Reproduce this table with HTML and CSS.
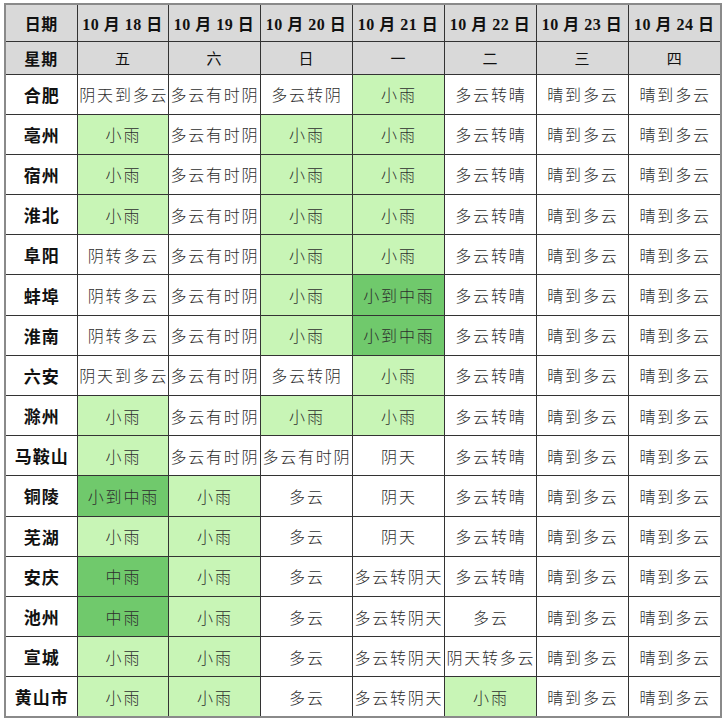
FILE: index.html
```html
<!DOCTYPE html>
<html lang="zh">
<head>
<meta charset="utf-8">
<link rel="stylesheet" href="styles.css">
</head>
<body>
<table class="wx">
<colgroup>
<col class="c-city"><col class="c-1"><col class="c-2"><col class="c-3"><col class="c-3"><col class="c-3"><col class="c-6"><col class="c-7">
</colgroup>
<thead>
<tr class="h1"><th>日期</th><th>10 月 18 日</th><th>10 月 19 日</th><th>10 月 20 日</th><th>10 月 21 日</th><th>10 月 22 日</th><th>10 月 23 日</th><th>10 月 24 日</th></tr>
<tr class="h2"><th>星期</th><td>五</td><td>六</td><td>日</td><td>一</td><td>二</td><td>三</td><td>四</td></tr>
</thead>
<tbody>
<tr><th>合肥</th><td>阴天到多云</td><td>多云有时阴</td><td>多云转阴</td><td class="l">小雨</td><td>多云转晴</td><td>晴到多云</td><td>晴到多云</td></tr>
<tr><th>亳州</th><td class="l">小雨</td><td>多云有时阴</td><td class="l">小雨</td><td class="l">小雨</td><td>多云转晴</td><td>晴到多云</td><td>晴到多云</td></tr>
<tr><th>宿州</th><td class="l">小雨</td><td>多云有时阴</td><td class="l">小雨</td><td class="l">小雨</td><td>多云转晴</td><td>晴到多云</td><td>晴到多云</td></tr>
<tr><th>淮北</th><td class="l">小雨</td><td>多云有时阴</td><td class="l">小雨</td><td class="l">小雨</td><td>多云转晴</td><td>晴到多云</td><td>晴到多云</td></tr>
<tr><th>阜阳</th><td>阴转多云</td><td>多云有时阴</td><td class="l">小雨</td><td class="l">小雨</td><td>多云转晴</td><td>晴到多云</td><td>晴到多云</td></tr>
<tr><th>蚌埠</th><td>阴转多云</td><td>多云有时阴</td><td class="l">小雨</td><td class="d">小到中雨</td><td>多云转晴</td><td>晴到多云</td><td>晴到多云</td></tr>
<tr><th>淮南</th><td>阴转多云</td><td>多云有时阴</td><td class="l">小雨</td><td class="d">小到中雨</td><td>多云转晴</td><td>晴到多云</td><td>晴到多云</td></tr>
<tr><th>六安</th><td>阴天到多云</td><td>多云有时阴</td><td>多云转阴</td><td class="l">小雨</td><td>多云转晴</td><td>晴到多云</td><td>晴到多云</td></tr>
<tr><th>滁州</th><td class="l">小雨</td><td>多云有时阴</td><td class="l">小雨</td><td class="l">小雨</td><td>多云转晴</td><td>晴到多云</td><td>晴到多云</td></tr>
<tr><th>马鞍山</th><td class="l">小雨</td><td>多云有时阴</td><td>多云有时阴</td><td>阴天</td><td>多云转晴</td><td>晴到多云</td><td>晴到多云</td></tr>
<tr><th>铜陵</th><td class="d">小到中雨</td><td class="l">小雨</td><td>多云</td><td>阴天</td><td>多云转晴</td><td>晴到多云</td><td>晴到多云</td></tr>
<tr><th>芜湖</th><td class="l">小雨</td><td class="l">小雨</td><td>多云</td><td>阴天</td><td>多云转晴</td><td>晴到多云</td><td>晴到多云</td></tr>
<tr><th>安庆</th><td class="d">中雨</td><td class="l">小雨</td><td>多云</td><td>多云转阴天</td><td>多云转晴</td><td>晴到多云</td><td>晴到多云</td></tr>
<tr><th>池州</th><td class="d">中雨</td><td class="l">小雨</td><td>多云</td><td>多云转阴天</td><td>多云</td><td>晴到多云</td><td>晴到多云</td></tr>
<tr><th>宣城</th><td class="l">小雨</td><td class="l">小雨</td><td>多云</td><td>多云转阴天</td><td>阴天转多云</td><td>晴到多云</td><td>晴到多云</td></tr>
<tr><th>黄山市</th><td class="l">小雨</td><td class="l">小雨</td><td>多云</td><td>多云转阴天</td><td class="l">小雨</td><td>晴到多云</td><td>晴到多云</td></tr>
</tbody>
</table>
</body>
</html>
```
FILE: styles.css
```css
html, body {
  margin: 0;
  background: #ffffff;
}
body {
  padding: 3px 0 0 4px;
  font-family: "Noto Sans CJK SC", "Noto Sans", sans-serif;
}
.wx {
  border-collapse: collapse;
  table-layout: fixed;
  width: 716px;
  border: 2px solid #8a8a8a;
}
.c-city { width: 72px; }
.c-1 { width: 91px; }
.c-2 { width: 92px; }
.c-3 { width: 92px; }
.c-6 { width: 92px; }
.c-7 { width: 93px; }
.wx th, .wx td {
  border: 1px solid #333333;
  padding: 0;
  text-align: center;
  vertical-align: middle;
  white-space: nowrap;
  overflow: hidden;
}
.wx td {
  font-size: 16px;
  font-weight: 300;
  color: #2e2e2e;
  letter-spacing: 1.8px;
  text-indent: 1.8px;
}
.wx tbody tr { height: 40.2px; }
.wx tbody th {
  font-size: 17px;
  font-weight: 700;
  color: #111111;
  letter-spacing: 1px;
  text-indent: 1px;
  background: #ffffff;
}
.h1 { height: 37px; }
.h2 { height: 33px; }
.h1 th, .h2 th, .h2 td {
  background: #d9d9d9;
  color: #111111;
}
.h1 th {
  font-family: "Liberation Serif", "Noto Sans CJK SC", serif;
  font-size: 16px;
  font-weight: 700;
  letter-spacing: 0.5px;
}
.h2 th {
  font-size: 16px;
  font-weight: 700;
  letter-spacing: 1px;
}
.h2 td {
  font-size: 15px;
  font-weight: 400;
}
.wx td.l { background: #c8f5b6; }
.wx td.d { background: #70c96c; }
```
